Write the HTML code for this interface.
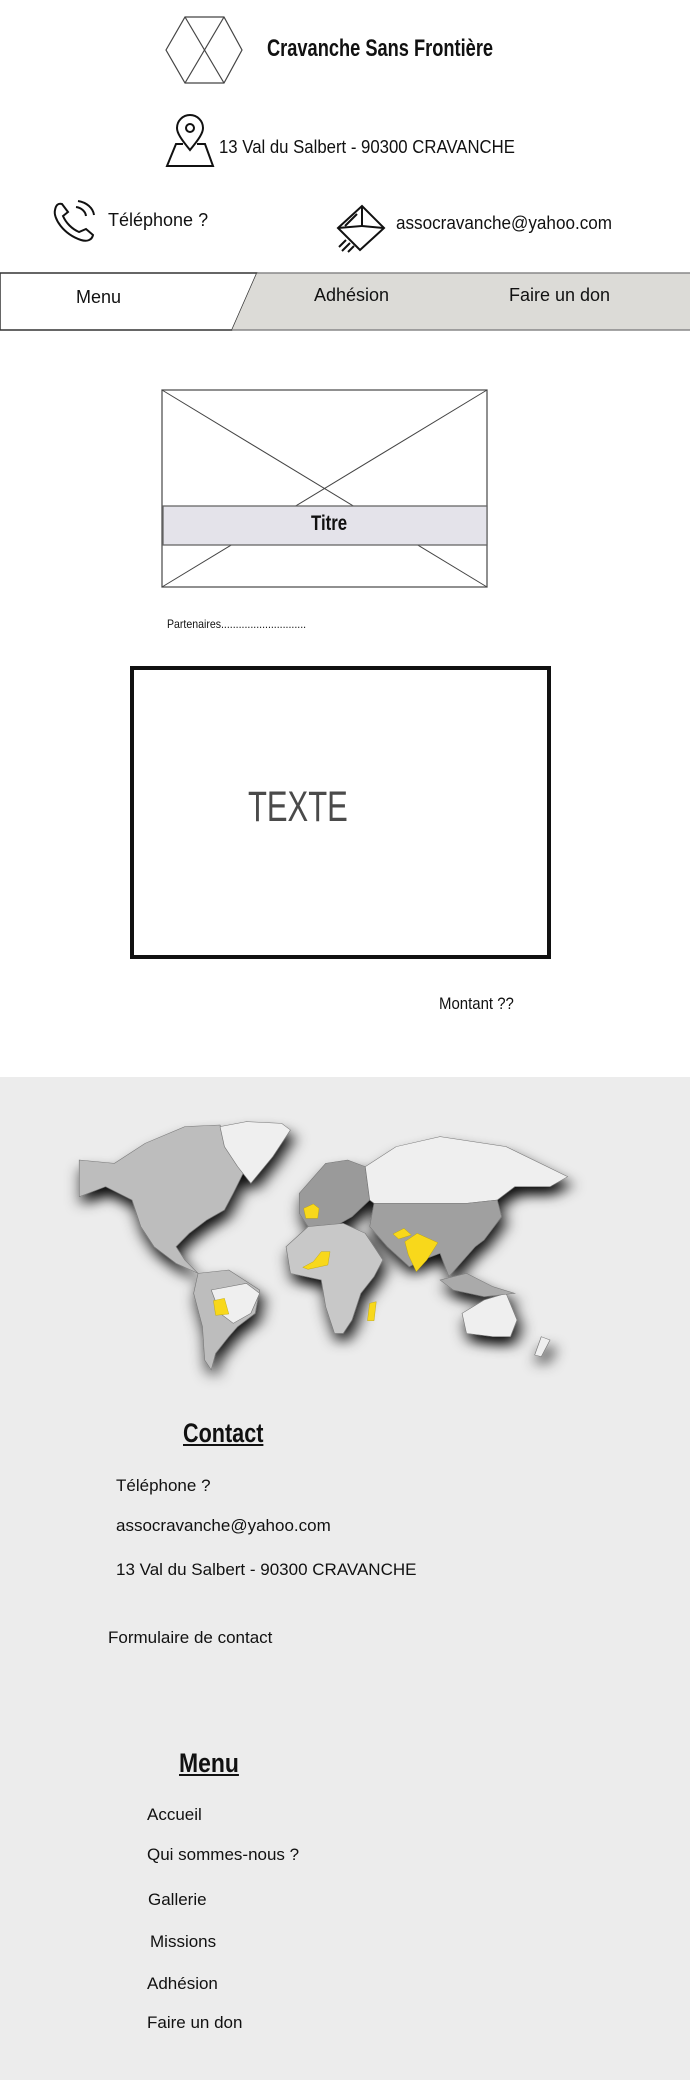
<!DOCTYPE html>
<html><head><meta charset="utf-8"><style>
*{margin:0;padding:0;box-sizing:border-box}
body{width:690px;height:2080px;background:#fff;position:relative;overflow:hidden;font-family:"Liberation Sans",sans-serif;color:#111}
.a{position:absolute;white-space:nowrap;line-height:1;transform-origin:left center}
.b{font-weight:bold}
</style></head><body>
<svg class="a" style="left:0;top:0" width="690" height="340">
<g fill="none" stroke="#444" stroke-width="1.2">
<polygon points="166,50 185,17 224,17 242,50 224,83 185,83"/>
<line x1="185" y1="17" x2="224" y2="83"/><line x1="224" y1="17" x2="185" y2="83"/>
</g>
<g fill="none" stroke="#111" stroke-width="2">
<path d="M190,150 C181,139 177,133 177,128 A13,13 0 0 1 203,128 C203,133 199,139 190,150 Z"/>
<circle cx="190" cy="128" r="4"/>
<path d="M183,144 L176,144 L167,166 L213,166 L205,144 L197,144"/>
<path d="M55,210 C53,218 63,234 81,240 C87,242 92,240 93,235 L86,229 L79,232 C72,229 66,223 63,216 L68,212 L62,204 C58,203 56,205 55,210 Z"/>
<path d="M76,207 A12,10 0 0 1 86,216"/><path d="M78,201 A20,16 0 0 1 94,215"/>
<path d="M338,228 L362,206 L384,228 L360,250 Z"/>
<path d="M338,228 L362,226 L362,206 M362,226 L384,228"/>
<path d="M346,240 L339,247 M350,243 L342,251 M354,246 L348,252"/>
<path d="M345,226 L357,214"/>
</g>
<path d="M0,273 L257,273 L232,330 L0,330 Z" fill="#fff" stroke="#333" stroke-width="1.5"/>
<path d="M257,273 L690,273 L690,330 L232,330 Z" fill="#dcdbd7"/>
<line x1="257" y1="273" x2="690" y2="273" stroke="#888" stroke-width="1.5"/>
<line x1="232" y1="330" x2="690" y2="330" stroke="#888" stroke-width="1.5"/>
</svg>
<div class="a b" style="left:267px;top:37px;font-size:24px;transform:scaleX(.76)">Cravanche Sans Frontière</div>
<div class="a" style="left:219px;top:138px;font-size:18px;transform:scaleX(.93)">13 Val du Salbert - 90300 CRAVANCHE</div>
<div class="a" style="left:108px;top:211px;font-size:18px">Téléphone ?</div>
<div class="a" style="left:396px;top:214px;font-size:18px;transform:scaleX(.95)">assocravanche@yahoo.com</div>
<div class="a" style="left:76px;top:288px;font-size:18px">Menu</div>
<div class="a" style="left:314px;top:286px;font-size:18px">Adhésion</div>
<div class="a" style="left:509px;top:286px;font-size:18px">Faire un don</div>

<svg class="a" style="left:161px;top:389px" width="328" height="200">
<rect x="1" y="1" width="325" height="197" fill="#fff" stroke="#555" stroke-width="1.3"/>
<line x1="1" y1="1" x2="326" y2="198" stroke="#444"/><line x1="326" y1="1" x2="1" y2="198" stroke="#444"/>
<rect x="2" y="117" width="324" height="39" fill="#e4e3ea" stroke="#666" stroke-width="1.3"/>
</svg>
<div class="a b" style="left:311px;top:513px;font-size:21px;transform:scaleX(.8)">Titre</div>
<div class="a" style="left:167px;top:618px;font-size:12px;transform:scaleX(.88)">Partenaires.............................</div>
<div class="a" style="left:130px;top:666px;width:421px;height:293px;border:4px solid #111"></div>
<div class="a" style="left:248px;top:786px;font-size:43px;color:#4a4a4a;transform:scaleX(.72)">TEXTE</div>
<div class="a" style="left:439px;top:995px;font-size:17px;transform:scaleX(.88)">Montant ??</div>

<div class="a" style="left:0;top:1077px;width:690px;height:1003px;background:#ececec"></div>
<svg class="a" style="left:0;top:1060px" width="690" height="340" viewBox="0 0 1568 1020" preserveAspectRatio="none">
<defs><filter id="s" x="-20%" y="-20%" width="140%" height="150%"><feDropShadow dx="8" dy="25" stdDeviation="18" flood-color="#000" flood-opacity="0.95"/></filter></defs>
<g filter="url(#s)" stroke="#777" stroke-width="1.5">
<polygon fill="#bdbdbd" points="180,300 260,310 330,250 420,200 500,195 520,260 560,320 530,400 510,450 470,480 430,520 400,560 420,600 450,640 400,610 350,560 320,500 300,420 240,380 180,410"/>
<polygon fill="#efefef" points="500,200 560,185 640,190 660,210 620,290 570,370 540,320 510,260"/>
<polygon fill="#bdbdbd" points="450,640 520,630 590,690 580,760 540,800 520,830 490,880 480,930 465,900 460,800 440,700"/>
<polygon fill="#efefef" points="480,690 560,670 590,700 570,760 530,790 500,760"/>
<polygon fill="#9a9a9a" points="680,400 740,310 790,300 830,320 840,420 800,470 760,500 700,500 680,460"/>
<polygon fill="#c8c8c8" points="650,560 700,500 780,490 830,520 870,600 850,650 820,700 800,780 780,820 760,820 740,740 730,660 660,640"/>
<polygon fill="#efefef" points="830,320 900,260 1000,230 1150,260 1290,350 1250,380 1170,380 1130,420 1060,430 950,430 850,430 840,420"/>
<polygon fill="#a0a0a0" points="850,430 950,430 1060,430 1130,420 1140,470 1100,540 1080,560 1040,620 1020,650 1000,580 960,600 930,620 880,560 840,500"/>
<polygon fill="#efefef" points="1050,760 1100,720 1150,700 1175,780 1160,830 1120,830 1060,820"/>
<polygon fill="#efefef" points="1230,830 1250,840 1230,890 1215,885"/>
<polygon fill="#aaa" points="1000,660 1060,640 1120,680 1170,700 1100,710 1030,690"/>
</g>
<g fill="#f8d81b" stroke="#b8a000">
<polygon points="690,445 712,432 725,445 722,475 695,475"/>
<polygon points="688,622 712,605 730,575 750,575 745,615 700,628"/>
<polygon points="485,722 510,715 520,762 490,766"/>
<polygon points="920,545 948,520 995,548 970,600 946,635 928,585"/>
<polygon points="893,522 918,505 935,525 906,537"/>
<polygon points="840,730 855,725 850,782 835,782"/>
</g>
</svg>

<div class="a b" style="left:183px;top:1420px;font-size:27px;text-decoration:underline;transform:scaleX(.8)">Contact</div>
<div class="a" style="left:116px;top:1477px;font-size:17px">Téléphone ?</div>
<div class="a" style="left:116px;top:1517px;font-size:17px">assocravanche@yahoo.com</div>
<div class="a" style="left:116px;top:1561px;font-size:17px">13 Val du Salbert - 90300 CRAVANCHE</div>
<div class="a" style="left:108px;top:1629px;font-size:17px">Formulaire de contact</div>
<div class="a b" style="left:179px;top:1750px;font-size:27px;text-decoration:underline;transform:scaleX(.85)">Menu</div>
<div class="a" style="left:147px;top:1806px;font-size:17px">Accueil</div>
<div class="a" style="left:147px;top:1846px;font-size:17px">Qui sommes-nous ?</div>
<div class="a" style="left:148px;top:1891px;font-size:17px">Gallerie</div>
<div class="a" style="left:150px;top:1933px;font-size:17px">Missions</div>
<div class="a" style="left:147px;top:1975px;font-size:17px">Adhésion</div>
<div class="a" style="left:147px;top:2014px;font-size:17px">Faire un don</div>
</body></html>
